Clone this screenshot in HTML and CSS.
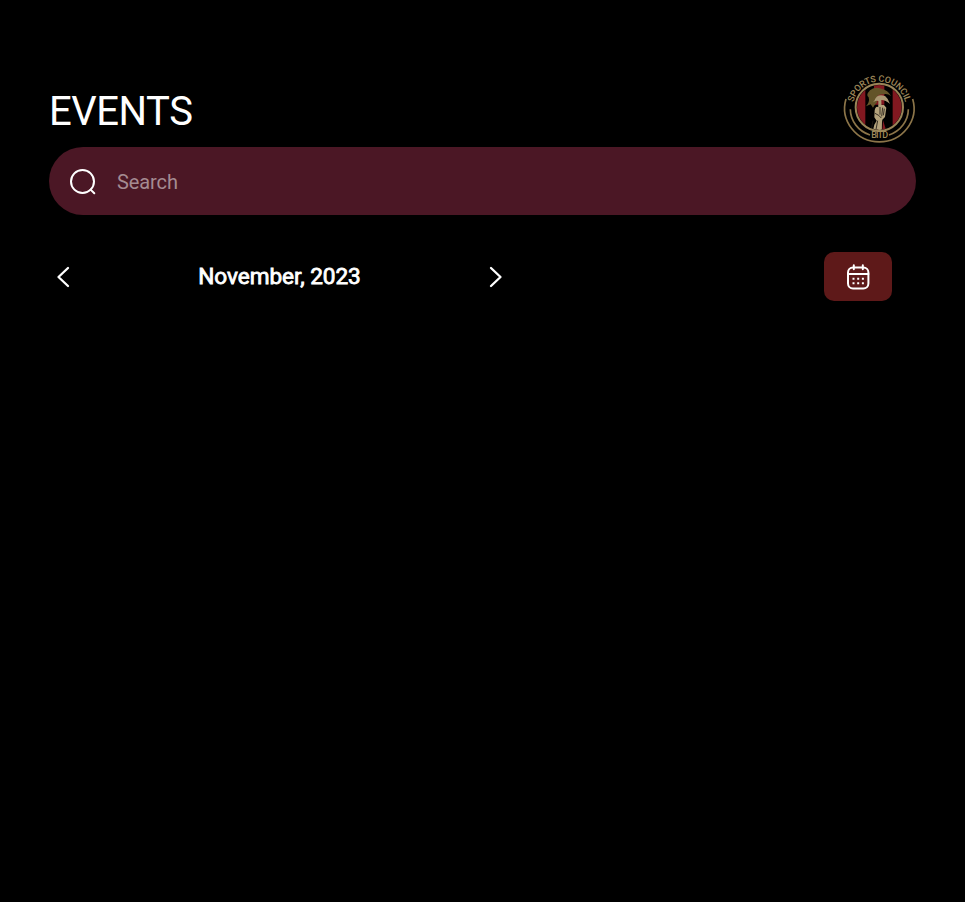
FILE: index.html
```html
<!DOCTYPE html>
<html lang="en">
<head>
<meta charset="utf-8">
<title>Events</title>
<link rel="stylesheet" href="styles.css">
</head>
<body>
<main class="page">
  <header class="header">
    <h1 class="title">EVENTS</h1>
    <svg class="logo" viewBox="0 0 252 240" role="img" aria-label="Sports Council">
      <defs>
        <path id="arc" d="M44 121A80 80 0 0 1 204 121"/>
        <clipPath id="disc"><circle cx="124" cy="118" r="67"/></clipPath>
      </defs>
      <g fill="none" stroke="#8c7549">
        <path d="M24 93A104 101 0 1 0 224 93" stroke-width="5"/>
        <path d="M37 124A87 82 0 0 0 96 201M153 201A87 82 0 0 0 211 124" stroke-width="5"/>
      </g>
      <g clip-path="url(#disc)">
        <path d="M56 50h26v140H56zM108 50h31v140h-31zM164 50h30v140h-30z" fill="#811820"/>
        <path d="M108 110h54v78h-54z" fill="#000"/>
        <path d="M84 115Q96 102 92 88Q82 82 96 67Q109 54 130 62Q150 66 159 84Q149 76 136 79Q121 78 116 88Q112 97 118 102Q110 110 105 119L98 109Z" fill="#635428"/>
        <path d="M109 98Q118 75 142 85Q151 92 156 108Q143 96 130 96L132 190H121V99Q112 97 105 103Z" fill="#aa9873"/>
        <path d="M110 127Q113 112 122 118V111H138L145 119L141 147L133 155L128 190H104L109 170L116 158L109 148Z" fill="#b3a27b"/>
        <path d="M126 117V140M134 119L131 145M139 122L136 142M111 136L122 142L130 150M119 158L113 190M105 158L99 190" fill="none" stroke="#211b15" stroke-width="2.5"/>
        <path d="M135 157L145 188H133Z" fill="#811820"/>
      </g>
      <circle cx="124" cy="118" r="71" fill="none" stroke="#9a8558" stroke-width="6"/>
      <g class="logo-text">
        <text><textPath href="#arc" startOffset="50%" text-anchor="middle" textLength="214">SPORTS COUNCIL</textPath></text>
        <text x="125" y="211" text-anchor="middle" textLength="51">BITD</text>
      </g>
    </svg>
  </header>
  <label class="search">
    <svg class="search-icon" viewBox="0 0 28 28" fill="none" stroke="#fff" stroke-width="2" stroke-linecap="round"><circle cx="13.5" cy="13.5" r="11.5"/><path d="M21.6 21.6L25.3 25.3"/></svg>
    <input class="search-input" type="text" placeholder="Search">
  </label>
  <section class="toolbar">
    <div class="month-nav">
      <button class="arrow" aria-label="Previous month"><svg viewBox="0 0 14 22"><path d="M12 2L2.5 11L12 20"/></svg></button>
      <span class="month">November, 2023</span>
      <button class="arrow" aria-label="Next month"><svg viewBox="0 0 14 22"><path d="M2 2L11.5 11L2 20"/></svg></button>
    </div>
    <button class="calendar" aria-label="Calendar">
      <svg viewBox="0 0 24 26" fill="none" stroke="#fff" stroke-width="2" stroke-linecap="round"><rect x="2" y="3.6" width="20.4" height="20.8" rx="5"/><path d="M2 10H22.4M7.8 1.2V5.2M16.8 1.2V5.2"/><path stroke="none" fill="#fff" d="M6.5 13.8h2v2h-2zM11.2 13.8h2v2h-2zM15.9 13.8h2v2h-2zM6.5 18.2h2v2h-2zM11.2 18.2h2v2h-2zM15.9 18.2h2v2h-2z"/></svg>
    </button>
  </section>
</main>
</body>
</html>
```
FILE: styles.css
```css
* { box-sizing: border-box; }
body { margin: 0; background: #000; color: #fff; font-family: Roboto, "Liberation Sans", sans-serif; }
.page { min-height: 902px; padding: 68px 49px 0; }
.header { display: flex; justify-content: space-between; align-items: flex-start; height: 79.4px; }
.title { margin: 20px 0 0; font-size: 40px; line-height: 47px; font-weight: 400; letter-spacing: -0.45px; }
.logo { width: 84px; height: 80px; margin-right: -6px; }
.logo-text { fill: #a08a5b; font-size: 27px; font-weight: 500; }
.search { display: flex; align-items: center; height: 68px; padding: 2px 20px 0; gap: 20px; border-radius: 34px; background: #4b1725; }
.search-icon { width: 28px; height: 28px; }
.search-input { flex: 1; padding: 0; border: 0; outline: 0; background: transparent; color: #fff; font: 400 20px/24px Roboto, sans-serif; letter-spacing: -0.1px; }
.search-input::placeholder { color: #a58b92; opacity: 1; }
.toolbar { display: flex; justify-content: space-between; align-items: center; margin-top: 36.6px; padding-right: 24px; }
.month-nav { display: flex; justify-content: space-between; align-items: center; width: 461px; padding: 2px 7px 0; }
.month { font-size: 22.6px; line-height: 26px; font-weight: 400; letter-spacing: -0.05px; -webkit-text-stroke: 0.8px #fff; }
.arrow { display: flex; padding: 0; border: 0; background: none; }
.arrow svg { width: 14px; height: 22px; fill: none; stroke: #fff; stroke-width: 2.3; stroke-linecap: round; stroke-linejoin: round; }
.calendar { display: flex; justify-content: center; align-items: center; width: 68px; height: 49px; padding: 2px 0 0; border: 0; border-radius: 10px; background: #5e1919; }
.calendar svg { width: 24px; height: 26px; }
```
